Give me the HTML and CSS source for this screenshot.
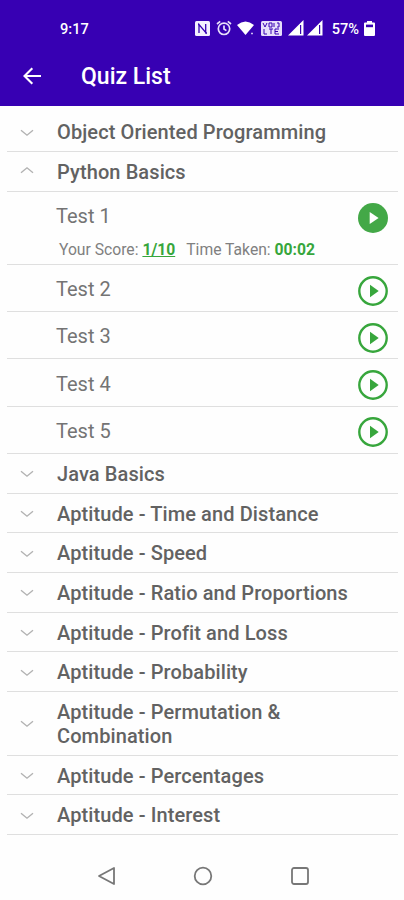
FILE: index.html
```
<!DOCTYPE html>
<html lang="en">
<head>
<meta charset="utf-8">
<title>Quiz List</title>
<link rel="stylesheet" href="styles.css">
</head>
<body>
<svg class="defs" width="0" height="0">
  <symbol id="chevron" viewBox="0 0 14 8"><path d="M1 1.2 7 6.2 13 1.2" fill="none" stroke="#b2b2b2" stroke-width="1.4"/></symbol>
  <symbol id="play" viewBox="0 0 30 30"><circle cx="15" cy="15" r="13.7" fill="none" stroke="#37a63c" stroke-width="2.4"/><path d="M12 8.8v12.4l8.7-6.2z" fill="#37a63c"/></symbol>
  <symbol id="signal" viewBox="0 0 16 16"><path d="M0 15.5 15.5 0v15.5z" fill="#fff"/><path d="M12.6 5v9" stroke="#3700b3" stroke-width="1.2"/></symbol>
</svg>
<header class="header">
  <div class="status">
    <span class="clock">9:17</span>
    <div class="indicators">
      <svg class="nfc" viewBox="0 0 15 15"><rect width="15" height="15" rx="1.5" fill="#f4efff"/><path d="M4 12V3.5l6.700 8V3M3 3.5h1.500M10.200 12H12" fill="none" stroke="#3700b3" stroke-width="1.3"/></svg>
      <svg class="alarm" viewBox="0 0 16 16" fill="none" stroke="#e8e0fa" stroke-width="1.7"><circle cx="8" cy="8.8" r="5.7"/><path d="M8 5.5V9l2.4 1.6M1 4l3.2-2.7M15 4l-3.2-2.7"/></svg>
      <svg class="wifi" viewBox="0 0 18 15"><path d="M0 4Q8.5-3 17 4L8.5 14z" fill="#fff"/><path d="M14 12.6h2" stroke="#cbbcf0" stroke-width="1.5"/></svg>
      <svg class="volte" viewBox="0 0 21 15"><rect width="21" height="15" rx="1.5" fill="#e6ddfa"/><g fill="none" stroke="#3700b3" stroke-width="1"><path d="m2 2 2 4 2-4M8 2v4h3V2zM13 2v4M16 2h2v4h-2M3 8v5h3M8 8h4M10 8v5M18 8h-4v5h4M14 10.5h3"/></g></svg>
      <svg class="signal"><use href="#signal"/></svg>
      <svg class="signal second"><use href="#signal"/></svg>
      <span class="percent">57%</span>
      <svg class="battery" viewBox="0 0 11 15"><path d="M3 0h5v1.5h2q1 0 1 1V14q0 1-1 1H1q-1 0-1-1V2.500q0-1 1-1h2z" fill="#fff"/><path d="M2 3.600h7v2.600H2z" fill="#3700b3"/></svg>
    </div>
  </div>
  <div class="toolbar">
    <svg class="back" viewBox="0 0 19 18"><path d="M18 9H1.500M9.300 1.200 1.500 9l7.800 7.800" fill="none" stroke="#fff" stroke-width="2.100"/></svg>
    <h1>Quiz List</h1>
  </div>
</header>
<main class="list">
  <section class="group"><svg class="chevron"><use href="#chevron"/></svg><h2>Object Oriented Programming</h2></section>
  <section class="group"><svg class="chevron open"><use href="#chevron"/></svg><h2>Python Basics</h2></section>
  <article class="test done">
    <div class="info">
      <h3>Test 1</h3>
      <p><span>Your Score: <b class="score">1/10</b></span><span>Time Taken: <b>00:02</b></span></p>
    </div>
    <svg class="play" viewBox="0 0 30 30"><circle cx="15" cy="15" r="15" fill="#43a847"/><path d="M11.700 9v12l8.900-6z" fill="#fff"/></svg>
  </article>
  <article class="test"><h3>Test 2</h3><svg class="play"><use href="#play"/></svg></article>
  <article class="test"><h3>Test 3</h3><svg class="play"><use href="#play"/></svg></article>
  <article class="test"><h3>Test 4</h3><svg class="play"><use href="#play"/></svg></article>
  <article class="test"><h3>Test 5</h3><svg class="play"><use href="#play"/></svg></article>
  <section class="group"><svg class="chevron"><use href="#chevron"/></svg><h2>Java Basics</h2></section>
  <section class="group"><svg class="chevron"><use href="#chevron"/></svg><h2>Aptitude - Time and Distance</h2></section>
  <section class="group"><svg class="chevron"><use href="#chevron"/></svg><h2>Aptitude - Speed</h2></section>
  <section class="group"><svg class="chevron"><use href="#chevron"/></svg><h2>Aptitude - Ratio and Proportions</h2></section>
  <section class="group"><svg class="chevron"><use href="#chevron"/></svg><h2>Aptitude - Profit and Loss</h2></section>
  <section class="group"><svg class="chevron"><use href="#chevron"/></svg><h2>Aptitude - Probability</h2></section>
  <section class="group tall"><svg class="chevron"><use href="#chevron"/></svg><h2>Aptitude - Permutation &amp;<br>Combination</h2></section>
  <section class="group"><svg class="chevron"><use href="#chevron"/></svg><h2>Aptitude - Percentages</h2></section>
  <section class="group"><svg class="chevron"><use href="#chevron"/></svg><h2>Aptitude - Interest</h2></section>
</main>
<nav class="nav">
  <svg viewBox="0 0 20 20"><path d="M17 2v16L2 10z"/></svg>
  <svg viewBox="0 0 20 20"><circle cx="10" cy="10" r="8.300"/></svg>
  <svg viewBox="0 0 20 20"><rect x="2" y="2" width="16" height="16" rx="2"/></svg>
</nav>
</body>
</html>
```
FILE: styles.css
```
* { box-sizing: border-box; }
body {
  margin: 0;
  height: 900px;
  display: flex;
  flex-direction: column;
  overflow: hidden;
  background: #fefefe;
  font-family: Roboto, sans-serif;
}
h1, h2, h3, p { margin: 0; }
svg { display: block; flex: none; }
.defs { position: absolute; }

.header { height: 106px; background: #3700b3; color: #fff; }
.status {
  height: 56px;
  padding: 0 29px 0 60px;
  display: flex;
  align-items: center;
  justify-content: space-between;
}
.clock, .percent { font-size: 14.600px; font-weight: 500; padding-top: 1px; }
.indicators { display: flex; align-items: center; }
.nfc { width: 15px; height: 15px; margin-right: 6px; }
.alarm { width: 16px; height: 16px; margin-right: 5px; }
.wifi { width: 18px; height: 15px; margin-right: 6px; }
.volte { width: 21px; height: 15px; margin-right: 6px; }
.signal { width: 16px; height: 16px; }
.second { margin: 0 9px 0 3px; }
.battery { width: 11px; height: 15px; margin-left: 5px; }
.toolbar { height: 39px; padding-left: 23px; display: flex; align-items: center; }
.back { width: 19px; height: 18px; margin-right: 39px; }
h1 { font-size: 23px; line-height: 28px; font-weight: 500; padding-top: 2px; }

.list { padding: 6.300px 6px 0 7px; }
.group, .test {
  display: flex;
  align-items: center;
  border-bottom: 1px solid #dfdfdf;
}
.group { height: 39.700px; padding: 1.800px 0 0 13px; }
.tall { height: 63.700px; }
.chevron { width: 14px; height: 8px; margin-right: 23px; }
.open { transform: translateY(-2px) scaleY(-1); }
h2 {
  font-size: 20px;
  line-height: 23.500px;
  font-weight: 500;
  letter-spacing: 0.100px;
  padding-top: 1px;
  color: #626262;
}
.test { height: 47.250px; padding: 0 10px 0 49px; justify-content: space-between; }
h3 { font-size: 20px; line-height: 24px; font-weight: 400; color: #747474; padding-top: 2px; }
.play { width: 30px; height: 30px; margin-top: 5px; }
.done { height: 73.300px; align-items: flex-start; padding-top: 12px; }
.done h3 { padding-top: 0; }
.done .play { margin-top: -1px; }
.done p {
  display: flex;
  gap: 11px;
  margin: 12px 0 0 3px;
  font-size: 15.700px;
  line-height: 20px;
  color: #808080;
}
b { font-weight: 700; color: #37a63c; }
.score { text-decoration: underline; text-decoration-thickness: 1px; }

.nav {
  flex: 1;
  display: flex;
  justify-content: center;
  align-items: center;
  gap: 76.500px;
  padding: 17px 0 0 2px;
}
.nav svg { width: 20px; height: 20px; fill: none; stroke: #777; stroke-width: 1.800; stroke-linejoin: round; }
```
